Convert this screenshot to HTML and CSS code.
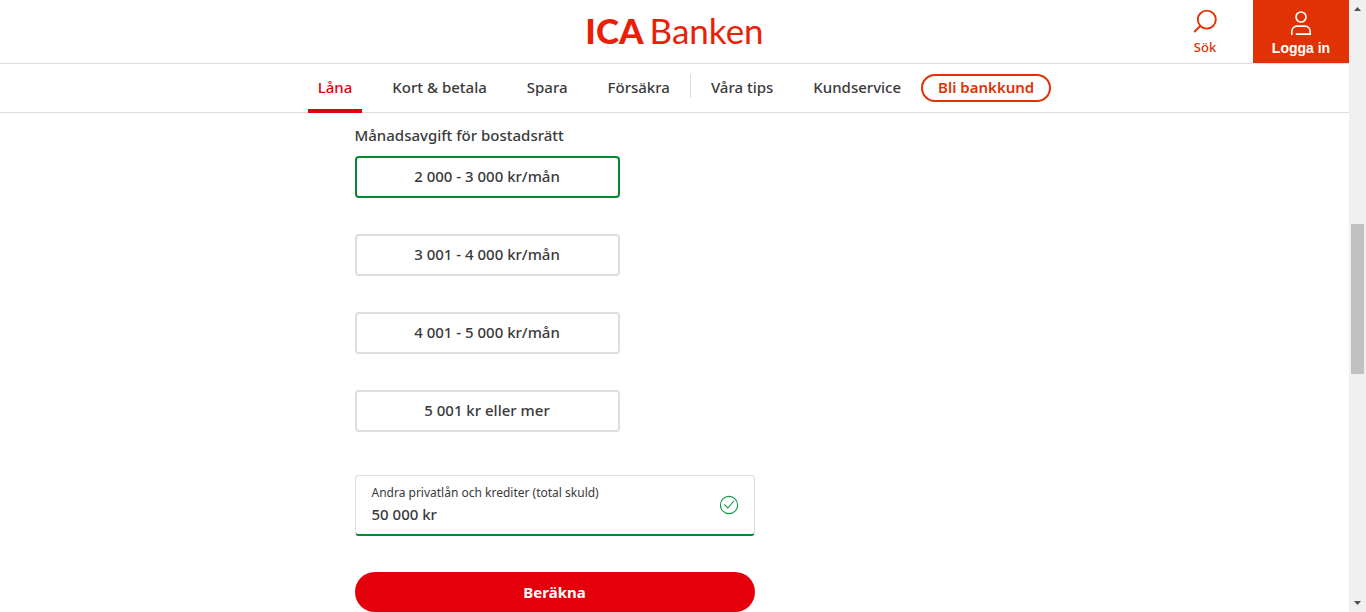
FILE: index.html
```html
<!DOCTYPE html>
<html lang="sv">
<head>
<meta charset="utf-8">
<meta name="viewport" content="width=device-width, initial-scale=1">
<title>ICA Banken</title>
<link rel="stylesheet" href="styles.css">
</head>
<body>
<div class="page">
  <header class="header">
    <a class="logo" href="#" aria-label="ICA Banken"><span class="logo-ica">ICA</span><span class="logo-bank">Banken</span></a>
    <div class="tools">
      <button class="tool search" type="button">
        <svg class="tool-icon" width="24" height="26" viewBox="0 0 24 26" fill="none" stroke="currentColor" stroke-width="1.900"><circle cx="13.800" cy="10.600" r="9"/><path d="M7.300 17 1.200 23"/></svg>
        <span>Sök</span>
      </button>
      <button class="tool login" type="button">
        <svg class="tool-icon" width="24" height="26" viewBox="0 0 24 26" fill="none" stroke="currentColor" stroke-width="1.700"><circle cx="12" cy="8" r="5"/><path d="M2.800 26v-3c0-3.200 2.200-5.800 5.400-5.800h7.600c3.200 0 5.400 2.600 5.400 5.800v2.100H6.800"/></svg>
        <span>Logga in</span>
      </button>
    </div>
  </header>
  <nav class="nav">
    <a class="nav-link active" href="#">Låna</a>
    <a class="nav-link" href="#">Kort &amp; betala</a>
    <a class="nav-link" href="#">Spara</a>
    <a class="nav-link" href="#">Försäkra</a>
    <span class="divider"></span>
    <a class="nav-link" href="#">Våra tips</a>
    <a class="nav-link" href="#">Kundservice</a>
    <a class="pill" href="#">Bli bankkund</a>
  </nav>
  <main class="main">
    <form class="form">
      <fieldset class="options">
        <legend class="legend">Månadsavgift för bostadsrätt</legend>
        <label class="option"><input type="radio" name="fee" checked><span>2 000 - 3 000 kr/mån</span></label>
        <label class="option"><input type="radio" name="fee"><span>3 001 - 4 000 kr/mån</span></label>
        <label class="option"><input type="radio" name="fee"><span>4 001 - 5 000 kr/mån</span></label>
        <label class="option"><input type="radio" name="fee"><span>5 001 kr eller mer</span></label>
      </fieldset>
      <div class="field">
        <div class="field-text">
          <label class="field-label" for="debt">Andra privatlån och krediter (total skuld)</label>
          <input class="field-input" id="debt" type="text" value="50 000 kr">
        </div>
        <svg width="20" height="20" viewBox="0 0 20 20" fill="none" stroke="#0a9a40"><circle cx="10" cy="10" r="8.600" stroke-width="1.100"/><path d="M5.200 9.400 8.800 13l6-7" stroke-width="1.100"/></svg>
      </div>
      <button class="submit" type="button">Beräkna</button>
    </form>
  </main>
</div>
<div class="scrollbar" aria-hidden="true">
  <svg width="17" height="17" viewBox="0 0 17 17"><path d="M5 11h7L8.500 7z" fill="#505050"/></svg>
  <div class="track"><div class="thumb"></div></div>
  <svg width="17" height="17" viewBox="0 0 17 17"><path d="M5 6h7l-3.500 4z" fill="#505050"/></svg>
</div>
</body>
</html>
```

FILE: styles.css
```css
* { box-sizing: border-box; }
body {
  margin: 0;
  min-height: 100vh;
  display: flex;
  background: #fff;
  color: #3a3a3a;
  font: 500 15px/20px "Noto Sans", sans-serif;
}
a { color: inherit; text-decoration: none; }
button, input { font: inherit; color: inherit; }
button { border: 0; cursor: pointer; }
.page { flex: 1; min-width: 0; }
.header {
  display: grid;
  grid-template-columns: 1fr auto 1fr;
  height: 64px;
  border-bottom: 1px solid #dedede;
}
.logo {
  grid-column: 2;
  display: flex;
  align-items: flex-start;
  gap: 6px;
  color: #eb1e08;
  font: 400 35px/60px Lato, sans-serif;
}
.logo-ica { font-weight: 900; }
.tools { display: flex; justify-content: flex-end; }
.tool {
  width: 96px;
  padding: 9px 0 0;
  display: flex;
  flex-direction: column;
  align-items: center;
  background: none;
}
.tool-icon { height: 26px; }
.search { color: #e13205; font-size: 13px; }
.search span { line-height: 24px; }
.login {
  background: #e13205;
  color: #fff;
  font: 700 14px/26px "Liberation Sans", sans-serif;
}
.nav {
  display: flex;
  justify-content: center;
  align-items: center;
  height: 49px;
  border-bottom: 1px solid #dedede;
}
.nav-link { padding: 13px 20px 15px; position: relative; }
.active { color: #e3000b; }
.active::after {
  content: "";
  position: absolute;
  left: 10px;
  right: 10px;
  bottom: -1px;
  height: 4px;
  background: #e3000b;
}
.divider { width: 1px; height: 24px; background: #dedede; margin-bottom: 4px; }
.pill {
  padding: 1px 15px 3px;
  border: 2px solid #e13205;
  border-radius: 14px;
  color: #e13205;
  font-weight: 600;
}
.main { max-width: 640px; margin: 0 auto; padding-top: 12px; }
.form { display: flex; flex-direction: column; }
.options {
  display: grid;
  gap: 36px;
  width: 265px;
  margin: 0;
  padding: 0;
  border: 0;
}
.legend { padding: 0 0 11px; white-space: nowrap; }
.option { position: relative; display: block; }
.option input { position: absolute; inset: 0; opacity: 0; margin: 0; }
.option span {
  display: block;
  padding: 8px 0 10px;
  border: 2px solid #dedee1;
  border-radius: 4px;
  text-align: center;
}
.option input:checked + span { border-color: #008a34; }
.field {
  display: flex;
  align-items: center;
  width: 400px;
  max-width: 100%;
  margin-top: 43px;
  padding: 7px 15px 8px 16px;
  border: 1px solid #dedede;
  border-bottom: 2px solid #008a34;
  border-radius: 4px;
}
.field-text { flex: 1; display: flex; flex-direction: column; }
.field-label { font-size: 12px; font-weight: 400; }
.field-input {
  width: 100%;
  height: 23px;
  padding: 0 0 2px;
  border: 0;
  outline: 0;
  background: none;
}
.submit {
  width: 400px;
  max-width: 100%;
  height: 40px;
  margin-top: 36px;
  border-radius: 20px;
  background: #e3000b;
  color: #fff;
  font-weight: 700;
}
.scrollbar { width: 17px; display: flex; flex-direction: column; background: #f0f0f0; }
.track { flex: 1; display: grid; grid-template-rows: 207fr 150fr 221fr; padding: 0 2px; }
.thumb { grid-row: 2; background: #c1c1c1; }
```
